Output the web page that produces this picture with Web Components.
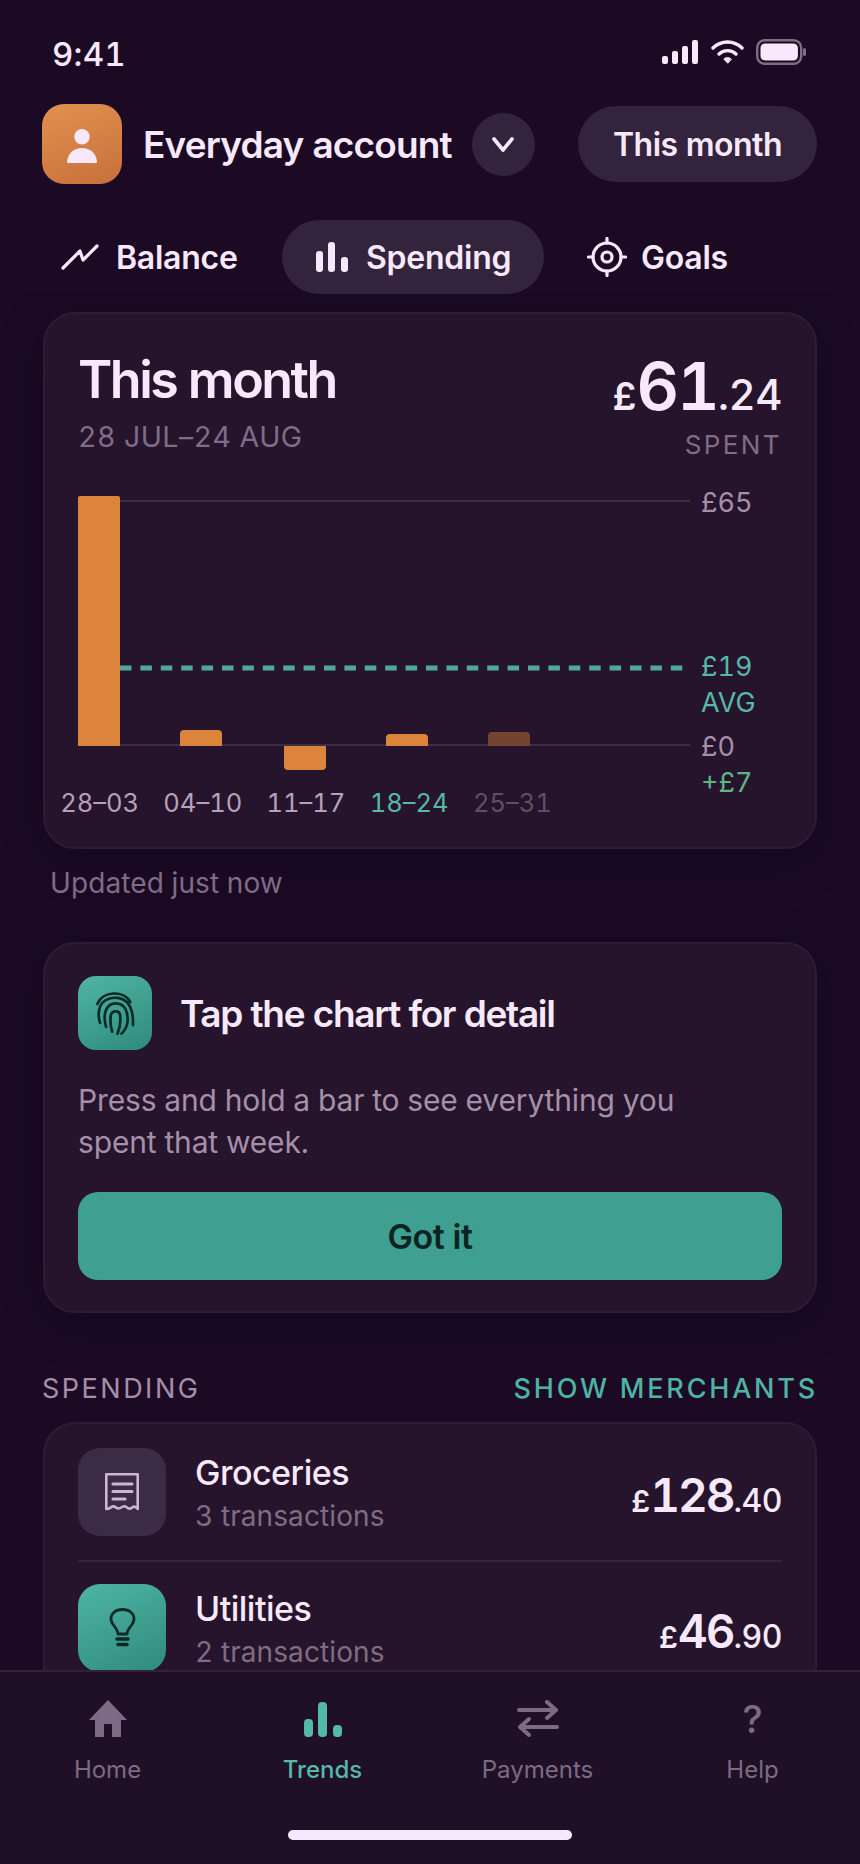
<!DOCTYPE html>
<html lang="en">
<head>
<meta charset="utf-8">
<title>Trends</title>
<style>
html, body { margin: 0; height: 100%; background: #1c0a24; }
body { font-family: Inter, "Noto Sans", sans-serif; color: #f7e9fb; font-variant-numeric: tabular-nums; }
</style>
</head>
<body>
<phone-app>
    <status-bar slot="top"></status-bar>
    <account-header slot="top"></account-header>
    <view-tabs slot="top"></view-tabs>
    <spend-chart></spend-chart>
    <hint-card></hint-card>
    <section-head></section-head>
    <spend-list>
        <spend-row name="Groceries" sub="3 transactions" whole="128" pence=".40" icon="receipt"></spend-row>
        <spend-row name="Utilities" sub="2 transactions" whole="46" pence=".90" icon="bulb" last></spend-row>
    </spend-list>
    <tab-bar slot="bottom"></tab-bar>
</phone-app>
<script>
'use strict';

const ICONS = {
    person: `<svg width="40" height="40" viewBox="0 0 40 40" fill="#f7e9fb"><circle cx="20" cy="12.700" r="7.700"/><path d="M6 39 C5 39 5 38 5 37.500 C6 29 12 24 20 24 C28 24 34 29 35 37.500 C35 38 35 39 34 39 Z"/></svg>`,
    chevron: `<svg width="24" height="17" viewBox="0 0 24 17" fill="none" stroke="#f7e9fb" stroke-width="3.600" stroke-linecap="round" stroke-linejoin="round"><path d="M3 3 L12 14 L21 3"/></svg>`,
    line: `<svg width="40" height="26" viewBox="0 0 40 26" fill="none" stroke="#f7e9fb" stroke-width="3.200" stroke-linecap="round" stroke-linejoin="round"><path d="M3 24 L20 7 L23 16 L37 2"/></svg>`,
    bars: `<svg width="32" height="30" viewBox="0 0 32 30" fill="#f7e9fb"><rect x="0" y="9" width="7" height="21" rx="3"/><rect x="12" y="0" width="7" height="30" rx="3"/><rect x="25" y="15" width="7" height="15" rx="3"/></svg>`,
    target: `<svg width="40" height="40" viewBox="0 0 40 40" fill="none" stroke="#f7e9fb" stroke-width="3.200" stroke-linecap="round"><circle cx="20" cy="20" r="14"/><circle cx="20" cy="20" r="5"/><path d="M20 1.500 V6 M20 34 V38.500 M1.500 20 H6 M34 20 H38.500"/></svg>`,
    print: `<svg width="42" height="47" viewBox="70 60 125 140" fill="none" stroke="#0a2a26" stroke-width="8" stroke-linecap="round"><path d="M80 102 C95 62 160 60 178 96"/><path d="M88 158 C78 125 85 85 130 83 C172 82 188 115 186 165"/><path d="M106 170 C94 128 108 100 135 100 C162 100 172 125 170 155 C168 170 160 182 152 190"/><path d="M124 184 C118 165 118 150 120 135 C124 120 146 120 148 136 C150 155 148 170 140 190"/></svg>`,
    receipt: `<svg width="34" height="38" viewBox="0 0 34 38" fill="none" stroke="#cdb6d4" stroke-width="2.600" stroke-linejoin="round"><path d="M1.300 1.300 H32.700 V36 C30 33 28.500 33 26.500 35 C24.500 37 22.500 35 20.500 33.500 C18.500 32 16 35.500 13.500 35.500 C11 35.500 10 32.500 7.500 33.500 C5 34.500 3.500 36.500 1.300 36 Z"/><path d="M8 11 H27 M8 18.500 H27 M8 26 H20" stroke-linecap="round" stroke-width="3.200"/></svg>`,
    bulb: `<svg width="27" height="40" viewBox="0 0 27 40" fill="none" stroke="#0a2a26" stroke-width="2.800" stroke-linecap="round"><path d="M9 26 C9 20 2 17 2 11 C2 5 7 1.500 13.500 1.500 C20 1.500 25 5 25 11 C25 17 18 20 18 26 Z" stroke-linejoin="round"/><path d="M8 31 H19 M9 36.500 H18" stroke-width="3.600"/></svg>`,
    home: `<svg width="40" height="38" viewBox="0 0 40 38" fill="#7d6a85"><path d="M20 0 L39 20 L33 20 L33 37 L24 37 L24 24 L16 24 L16 37 L7 37 L7 20 L1 20 Z"/></svg>`,
    trends: `<svg width="38" height="35" viewBox="0 0 38 35" fill="#55b8a9"><rect x="0" y="17" width="9" height="18" rx="4"/><rect x="14" y="0" width="9" height="35" rx="4"/><rect x="29" y="23" width="9" height="12" rx="4"/></svg>`,
    transfer: `<svg width="42" height="38" viewBox="0 0 42 38" fill="none" stroke="#7d6a85" stroke-width="4" stroke-linecap="round" stroke-linejoin="round"><path d="M2 10 H39 M30 2 L39 10 L30 18"/><path d="M40 27 H3 M12 19 L3 27 L12 35"/></svg>`
};

class PhoneApp extends HTMLElement {
    connectedCallback() {
        this.attachShadow({ mode: 'open' }).innerHTML = `<style>
    :host { display: flex; flex-direction: column; height: 1864px; overflow: hidden; }
    .scroll { flex: 1; min-height: 0; overflow: hidden; padding: 18px 43px 0; display: flex; flex-direction: column; }
</style>
<slot name="top"></slot>
<div class="scroll"><slot></slot></div>
<slot name="bottom"></slot>`;
    }
}

class StatusBar extends HTMLElement {
    connectedCallback() {
        this.attachShadow({ mode: 'open' }).innerHTML = `<style>
    :host { display: flex; justify-content: space-between; align-items: flex-start; height: 104px; padding: 0 54px 0 52px; box-sizing: border-box; }
    .time { font-size: 33px; font-weight: 500; line-height: 38px; margin-top: 35px; letter-spacing: .2px; }
    .icons { display: flex; align-items: center; gap: 12px; margin-top: 39px; }
</style>
<div class="time">9:41</div>
<div class="icons">
    <svg width="37" height="24" viewBox="0 0 37 24" fill="#f7e9fb"><rect x="0" y="16" width="6" height="8" rx="2"/><rect x="10" y="11" width="6" height="13" rx="2"/><rect x="20" y="6" width="6" height="18" rx="2"/><rect x="30" y="0" width="6" height="24" rx="2"/></svg>
    <svg width="33" height="24" viewBox="0 0 33 24" fill="none" stroke="#f7e9fb" stroke-width="3.400" stroke-linecap="round"><path d="M2 8 C10 0 23 0 31 8"/><path d="M8 14 C12.500 9.500 20.500 9.500 25 14"/><path d="M16.500 23 L12.800 19 C15 17 18 17 20.200 19 Z" fill="#f7e9fb" stroke-width="1"/></svg>
    <svg width="50" height="26" viewBox="0 0 50 26"><rect x="1.200" y="1.200" width="44" height="23.600" rx="7.500" fill="none" stroke="#7f6c86" stroke-width="2.400"/><rect x="4.500" y="4.500" width="37.400" height="17" rx="4.500" fill="#f7e9fb"/><rect x="47" y="9" width="3" height="8" rx="1.500" fill="#7f6c86"/></svg>
</div>`;
    }
}

class AccountHeader extends HTMLElement {
    connectedCallback() {
        this.attachShadow({ mode: 'open' }).innerHTML = `<style>
    :host { display: flex; align-items: center; height: 80px; padding: 0 43px 0 42px; }
    .avatar { width: 80px; height: 80px; border-radius: 22px; background: linear-gradient(160deg, #e29150, #c7703a); display: flex; align-items: center; justify-content: center; flex: none; }
    .name { font-size: 37px; font-weight: 600; letter-spacing: -.85px; margin-left: 21px; white-space: nowrap; }
    .chev { width: 63px; height: 63px; border-radius: 50%; background: #33233d; margin-left: 20px; display: flex; align-items: center; justify-content: center; flex: none; }
    .period { margin-left: auto; height: 76px; width: 239px; border-radius: 38px; background: #33233d; display: flex; align-items: center; justify-content: center; font-size: 32px; font-weight: 600; letter-spacing: -.5px; flex: none; }
</style>
<div class="avatar">${ICONS.person}</div>
<div class="name">Everyday account</div>
<div class="chev">${ICONS.chevron}</div>
<div class="period">This month</div>`;
    }
}

class ViewTabs extends HTMLElement {
    connectedCallback() {
        this.attachShadow({ mode: 'open' }).innerHTML = `<style>
    :host { display: flex; align-items: center; height: 74px; margin-top: 36px; padding-left: 43px; }
    .tab { display: flex; align-items: center; height: 74px; border-radius: 37px; font-size: 32px; font-weight: 600; letter-spacing: -.25px; gap: 16px; box-sizing: border-box; }
    .balance { padding-left: 17px; width: 239px; }
    .on { background: #33233d; width: 262px; padding-left: 34px; gap: 18px; }
    .goals { padding-left: 43px; gap: 14px; }
</style>
<div class="tab balance">${ICONS.line}<span>Balance</span></div>
<div class="tab on">${ICONS.bars}<span>Spending</span></div>
<div class="tab goals">${ICONS.target}<span>Goals</span></div>`;
    }
}

class MoneyAmount extends HTMLElement {
    connectedCallback() {
        const big = Number(this.getAttribute('big'));
        const cur = this.getAttribute('cur');
        const small = this.getAttribute('small');
        this.attachShadow({ mode: 'open' }).innerHTML = `<style>
    :host { display: inline-flex; align-items: baseline; font-weight: 600; line-height: 1; }
    .cur { font-size: ${cur}px; }
    .big { font-size: ${big}px; letter-spacing: -2px; }
    .small { font-size: ${small}px; font-weight: 500; letter-spacing: -.5px; }
</style>
<span class="cur">£</span><span class="big">${this.getAttribute('whole')}</span><span class="small">${this.getAttribute('pence')}</span>`;
    }
}

class SpendChart extends HTMLElement {
    connectedCallback() {
        const weeks = [['28–03', '#b5a2ba'], ['04–10', '#b5a2ba'], ['11–17', '#b5a2ba'], ['18–24', '#55b8a9'], ['25–31', '#5f4e66']];
        this.attachShadow({ mode: 'open' }).innerHTML = `<style>
    :host { display: block; flex: none; box-sizing: border-box; height: 537px; padding: 38px 33px 0; background: #26142c; border: 2px solid #2d1c34; border-radius: 32px; box-shadow: 0 10px 40px rgba(14, 0, 24, .45); position: relative; }
    .top { display: flex; justify-content: space-between; }
    h2 { margin: -3px 0 0; font-size: 52px; font-weight: 600; letter-spacing: -2.500px; line-height: 62px; }
    .date { font-size: 28.500px; color: #7f6c86; letter-spacing: .45px; line-height: 34px; margin-top: 9px; }
    .right { text-align: right; }
    .amt { height: 62px; margin-top: 5px; display: flex; justify-content: flex-end; align-items: flex-end; }
    .spent { font-size: 26px; color: #7f6c86; letter-spacing: 2.400px; line-height: 32px; margin-top: 10px; }
    .plot { position: relative; height: 345px; margin-top: 28px; }
    svg { position: absolute; left: 0; top: 0; }
    .lab { position: absolute; left: 623px; font-size: 27px; line-height: 32px; white-space: nowrap; }
    .weeks { position: absolute; left: -30px; top: 299px; display: flex; }
    .weeks span { width: 103.200px; text-align: center; font-size: 25.500px; line-height: 30px; white-space: nowrap; }
</style>
<div class="top">
    <div><h2>This month</h2><div class="date">28 JUL–24 AUG</div></div>
    <div class="right"><div class="amt"><money-amount big="66" cur="38" small="42" whole="61" pence=".24"></money-amount></div><div class="spent">SPENT</div></div>
</div>
<div class="plot">
    <svg width="640" height="300" viewBox="0 0 640 300">
        <line x1="42" y1="12" x2="612" y2="12" stroke="#3d2d44" stroke-width="2"/>
        <line x1="0" y1="256" x2="612" y2="256" stroke="#3d2d44" stroke-width="2"/>
        <line x1="42" y1="179" x2="612" y2="179" stroke="#4fa99b" stroke-width="5" stroke-dasharray="11.500 8.900"/>
        <path d="M0 9 a2 2 0 0 1 2 -2 H40 a2 2 0 0 1 2 2 V257 H0 Z" fill="#dc843c"/>
        <path d="M102 245 a4 4 0 0 1 4 -4 H140 a4 4 0 0 1 4 4 V257 H102 Z" fill="#dc843c"/>
        <path d="M206 257 H248 V277 a4 4 0 0 1 -4 4 H210 a4 4 0 0 1 -4 -4 Z" fill="#dc843c"/>
        <path d="M308 249 a4 4 0 0 1 4 -4 H346 a4 4 0 0 1 4 4 V257 H308 Z" fill="#dc843c"/>
        <path d="M410 247 a4 4 0 0 1 4 -4 H448 a4 4 0 0 1 4 4 V257 H410 Z" fill="#744431"/>
    </svg>
    <span class="lab" style="top:-2px;color:#a58fa9">£65</span>
    <span class="lab" style="top:162px;color:#55b8a9">£19</span>
    <span class="lab" style="top:198px;color:#55b8a9">AVG</span>
    <span class="lab" style="top:242px;color:#a58fa9">£0</span>
    <span class="lab" style="top:278px;color:#5cb585">+£7</span>
    <div class="weeks">${weeks.map(w => `<span style="color:${w[1]}">${w[0]}</span>`).join('')}</div>
</div>`;
    }
}

class HintCard extends HTMLElement {
    connectedCallback() {
        this.attachShadow({ mode: 'open' }).innerHTML = `<style>
    :host { display: block; flex: none; position: relative; margin-top: 93px; box-sizing: border-box; height: 371px; padding: 32px 33px 0; background: #26142c; border: 2px solid #2d1c34; border-radius: 32px; box-shadow: 0 10px 40px rgba(14, 0, 24, .45); }
    .updated { position: absolute; left: 5px; top: -78px; font-size: 28px; letter-spacing: .1px; line-height: 34px; color: #7f6c86; }
    .head { display: flex; align-items: center; gap: 28px; }
    .ic { width: 74px; height: 74px; border-radius: 18px; background: linear-gradient(155deg, #4fb5a4, #2f8a7c); display: flex; align-items: center; justify-content: center; flex: none; }
    .t { font-size: 37px; font-weight: 600; letter-spacing: -1.350px; }
    p { margin: 29px 0 0; font-size: 30px; letter-spacing: -.15px; line-height: 42px; color: #a58fa9; }
    button { display: block; width: 100%; height: 88px; margin-top: 29px; border: 0; border-radius: 20px; background: #3f9f91; color: #0b2420; font: 600 34px Inter, sans-serif; letter-spacing: -.4px; }
</style>
<div class="updated">Updated just now</div>
<div class="head"><div class="ic">${ICONS.print}</div><div class="t">Tap the chart for detail</div></div>
<p>Press and hold a bar to see everything you<br>spent that week.</p>
<button>Got it</button>`;
    }
}

class SectionHead extends HTMLElement {
    connectedCallback() {
        this.attachShadow({ mode: 'open' }).innerHTML = `<style>
    :host { display: flex; flex: none; justify-content: space-between; align-items: center; height: 32px; margin-top: 59px; font-size: 27px; white-space: nowrap; }
    .a { color: #a58fa9; letter-spacing: 2.500px; margin-left: -1px; }
    .b { color: #4fb3a3; font-weight: 500; letter-spacing: 2.800px; margin-right: -1px; }
</style>
<span class="a">SPENDING</span><span class="b">SHOW MERCHANTS</span>`;
    }
}

class SpendList extends HTMLElement {
    connectedCallback() {
        this.attachShadow({ mode: 'open' }).innerHTML = `<style>
    :host { display: block; flex: none; margin-top: 18px; padding: 24px 33px 0; background: #26142c; border: 2px solid #2d1c34; border-radius: 32px 32px 0 0; border-bottom: 0; height: 400px; box-sizing: border-box; }
</style>
<slot></slot>`;
    }
}

class SpendRow extends HTMLElement {
    connectedCallback() {
        const dim = this.getAttribute('icon') === 'receipt';
        const last = this.hasAttribute('last');
        this.attachShadow({ mode: 'open' }).innerHTML = `<style>
    :host { display: flex; align-items: center; height: 88px; padding-bottom: 24px; margin-bottom: 22px; ${last ? '' : 'border-bottom: 2px solid #33233d;'} }
    .ic { width: 88px; height: 88px; border-radius: 22px; flex: none; display: flex; align-items: center; justify-content: center; background: ${dim ? '#3c2b44' : 'linear-gradient(155deg, #4fb5a4, #2f8a7c)'}; }
    .txt { margin-left: 29px; flex: 1; }
    .n { font-size: 34px; font-weight: 500; letter-spacing: -.5px; line-height: 44px; }
    .s { font-size: 28px; letter-spacing: .1px; line-height: 36px; color: #7f6c86; margin-top: 3px; }
    money-amount { margin-top: 6px; }
</style>
<div class="ic">${ICONS[this.getAttribute('icon')]}</div>
<div class="txt"><div class="n">${this.getAttribute('name')}</div><div class="s">${this.getAttribute('sub')}</div></div>
<money-amount big="46" cur="30" small="32" whole="${this.getAttribute('whole')}" pence="${this.getAttribute('pence')}"></money-amount>`;
    }
}

class TabBar extends HTMLElement {
    connectedCallback() {
        this.attachShadow({ mode: 'open' }).innerHTML = `<style>
    :host { display: block; flex: none; height: 194px; box-sizing: border-box; background: #201027; border-top: 2px solid #33213b; position: relative; z-index: 1; }
    .items { display: grid; grid-template-columns: repeat(4, 1fr); padding-top: 28px; }
    .it { display: flex; flex-direction: column; align-items: center; color: #7d6a85; font-size: 24px; }
    .ic { height: 38px; display: flex; align-items: center; }
    .lab { margin-top: 17px; line-height: 30px; }
    .on { color: #55b8a9; font-weight: 500; }
    .q { font-size: 38px; font-weight: 500; line-height: 38px; }
    .home { width: 284px; height: 10px; border-radius: 5px; background: #f7e9fb; margin: 45px auto 0; }
</style>
<div class="items">
    <div class="it"><div class="ic">${ICONS.home}</div><div class="lab">Home</div></div>
    <div class="it on"><div class="ic">${ICONS.trends}</div><div class="lab">Trends</div></div>
    <div class="it"><div class="ic">${ICONS.transfer}</div><div class="lab">Payments</div></div>
    <div class="it"><div class="ic q">?</div><div class="lab">Help</div></div>
</div>
<div class="home"></div>`;
    }
}

customElements.define('phone-app', PhoneApp);
customElements.define('status-bar', StatusBar);
customElements.define('account-header', AccountHeader);
customElements.define('view-tabs', ViewTabs);
customElements.define('money-amount', MoneyAmount);
customElements.define('spend-chart', SpendChart);
customElements.define('hint-card', HintCard);
customElements.define('section-head', SectionHead);
customElements.define('spend-list', SpendList);
customElements.define('spend-row', SpendRow);
customElements.define('tab-bar', TabBar);
</script>
</body>
</html>
